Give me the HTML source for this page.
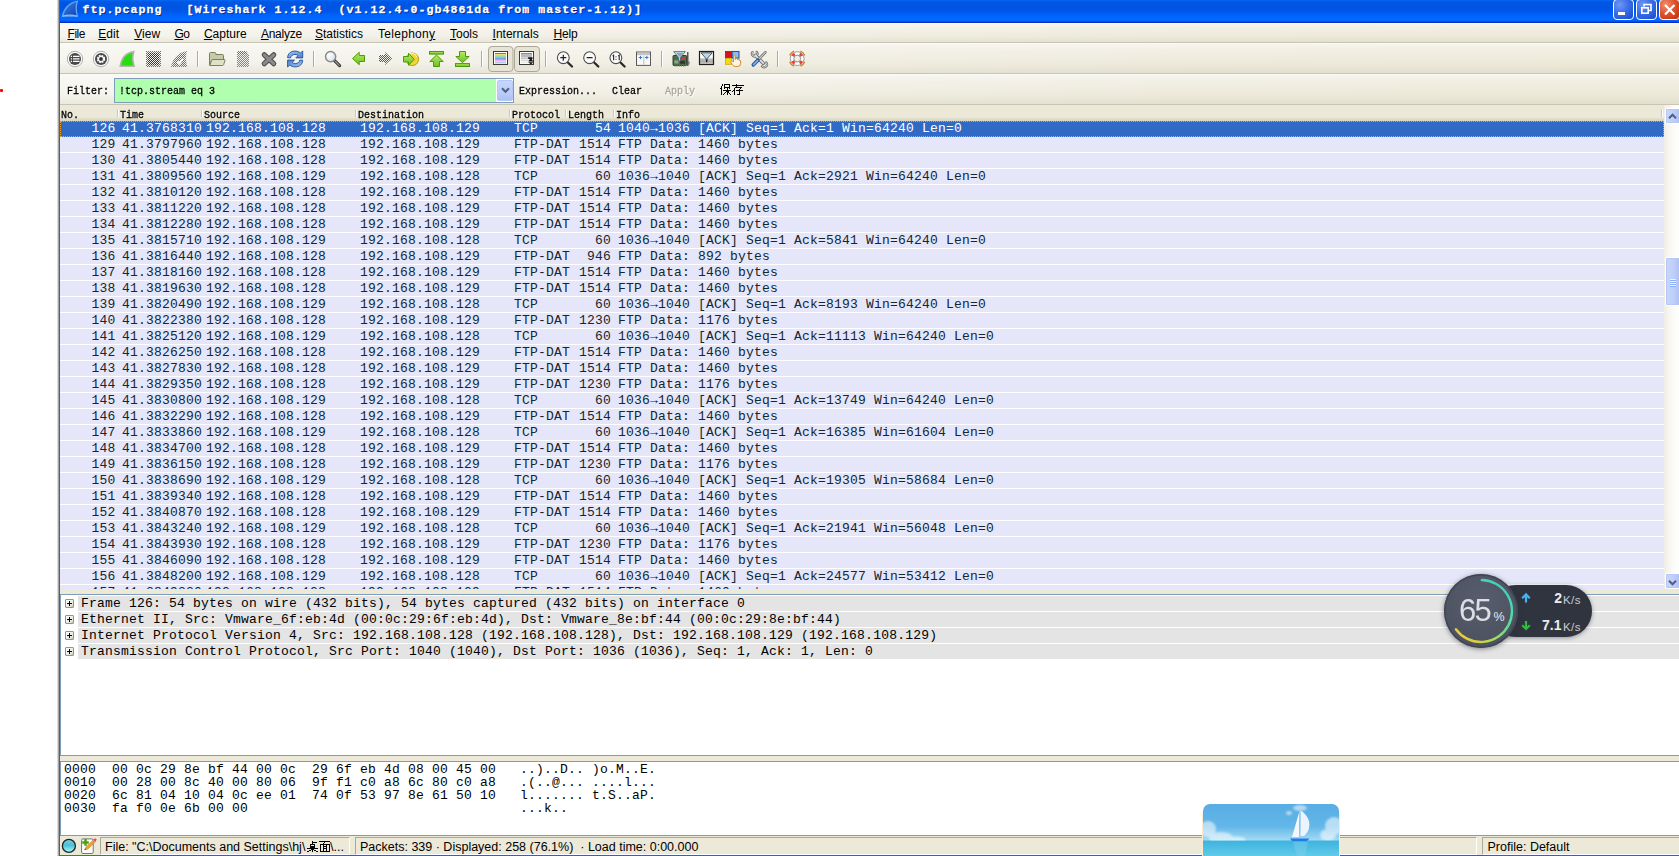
<!DOCTYPE html>
<html><head><meta charset="utf-8"><title>ftp.pcapng</title>
<style>
html,body{margin:0;padding:0}
body{width:1679px;height:856px;overflow:hidden;background:#fff;position:relative;font-family:"Liberation Sans",sans-serif;font-size:11px;color:#000}
div,span,svg{position:absolute;box-sizing:border-box}
.mono{font-family:"Liberation Mono",monospace;font-size:13px;letter-spacing:0.2px;white-space:pre}
/* SimSun-like 6px advance text */
.ss{font-family:"Liberation Mono",monospace;font-size:11px;white-space:pre;transform:scaleX(0.9091);transform-origin:0 0;line-height:14px;color:#000;-webkit-text-stroke:0.3px}
#win{left:60px;top:0;width:1619px;height:856px;background:#ece9d8;overflow:hidden}
#title{left:0;top:0;width:1619px;height:23px;background:linear-gradient(#0768f2 0px,#0059e8 1.5px,#0055e2 4px,#0055e2 9px,#0058ee 12px,#0063fa 15px,#0068ff 18px,#0067ff 20.3px,#0050e8 21.5px,#002fc8 22.4px,#002fc8 23px)}
#ttext{left:22.5px;top:3px;font-family:"Liberation Mono",monospace;font-weight:bold;font-size:11.6px;letter-spacing:1.04px;white-space:pre;color:#fff;text-shadow:1px 1px 0 #0a1883;line-height:14px;-webkit-text-stroke:0.28px #fff}
.tb{top:-1px;width:21px;height:21px;border:1px solid #fff;border-radius:4px;background:radial-gradient(circle at 30% 25%,#6f96f5 0,#3a6fe8 45%,#2456d8 80%,#1c47c4 100%)}
#menubar{left:0;top:23px;width:1619px;height:20px;background:linear-gradient(to bottom,rgba(255,255,255,.55) 0,rgba(255,255,255,.25) 25%,rgba(255,255,255,0) 65%,rgba(170,165,140,.16) 100%),linear-gradient(to right,#f5f4ed 0,#f1efe4 35%,#edeadb 70%,#ece9d8 100%)}
.mi{top:4px;font-size:12px;line-height:14px;white-space:pre}
.mi u{text-decoration:underline}
#toolbar{left:0;top:43px;width:1619px;height:31px;background:linear-gradient(to bottom,rgba(255,255,255,.55) 0,rgba(255,255,255,.25) 25%,rgba(255,255,255,0) 65%,rgba(170,165,140,.16) 100%),linear-gradient(to right,#f5f4ed 0,#f1efe4 35%,#edeadb 70%,#ece9d8 100%)}
#filterbar{left:0;top:74px;width:1619px;height:31px;background:linear-gradient(to bottom,rgba(255,255,255,.55) 0,rgba(255,255,255,.25) 25%,rgba(255,255,255,0) 65%,rgba(170,165,140,.16) 100%),linear-gradient(to right,#f5f4ed 0,#f1efe4 35%,#edeadb 70%,#ece9d8 100%)}
.bl{left:0;bottom:0;width:1619px;height:1px;background:#c8c5b2}
.tl{left:0;top:0;width:1619px;height:1px;background:#fbfaf7}
#colhdr{left:0;top:105px;width:1619px;height:16px;background:linear-gradient(#ebe8d7 0,#ece9d8 12px,#e6e3d1 13px,#dfdcc9 14px,#d8d4c0 16px)}
#colhdr .ss{top:3px}
.sep{top:5px;width:2px;height:7px;border-left:1px solid #c9c6b4;border-right:1px solid #fff}
#list{left:0;top:121px;width:1604px;height:468px;background:#fff;overflow:hidden}
.r{left:0;width:1604px;height:16px;background:#e6e6fa;border-bottom:1px solid #fff;color:#12272e;font-family:"Liberation Mono",monospace;font-size:13px;letter-spacing:0.2px;white-space:pre;line-height:15px}
.r .c{top:0}
.r.sel{background:#316ac5;color:#fff;border:0}
.r.sel .c{top:0}
.r.sel:before{content:"";position:absolute;left:0;top:0;width:1604px;height:16px;box-sizing:border-box;border:1px dotted #f2a526}
.c{top:0}
#vsb{left:1604px;top:105px;width:15px;height:484px;background:linear-gradient(90deg,#f0eee4 0,#f7f6f1 5px,#fdfdfb 12px)}
.sbb{width:16px;border:1px solid #fff;border-radius:2px;background:linear-gradient(90deg,#c9d8fc,#bccdf9 60%,#aebff0);box-shadow:0 0 0 1px #b4c7f6 inset}
#div1{left:0;top:589px;width:1619px;height:5px;background:#ece9d8}
#details{left:0;top:594px;width:1621px;height:162px;background:#fff;border:1px solid #7f9db9}
.d{left:17px;width:1604px;height:15px;background:#e4e4e4;color:#000;font-family:"Liberation Mono",monospace;font-size:13px;letter-spacing:0.2px;white-space:pre;line-height:15px;padding-left:3px}
.ex{left:4px;width:9px;height:9px;border:1px solid #7898b5;border-radius:1px;background:linear-gradient(135deg,#fff 0,#e9e6dc 70%,#c9c5b4 100%)}
.ex:before{content:"";position:absolute;left:1px;top:3px;width:5px;height:1px;background:#000}
.ex:after{content:"";position:absolute;left:3px;top:1px;width:1px;height:5px;background:#000}
#div2{left:0;top:756px;width:1619px;height:5px;background:#ece9d8}
#hex{left:0;top:761px;width:1621px;height:75px;background:#fff;border:1px solid #7f9db9}
#hex .mono{left:3px;line-height:13px;color:#000}
#status{left:0;top:836px;width:1619px;height:20px;background:#ece9d8}
.sbx{top:1px;height:18px;border-bottom:1px solid #fff;border-left:1px solid #aca899;border-top:1px solid #aca899;border-right:1px solid #fff}
.st{top:4px;font-size:12.5px;line-height:14px;white-space:pre}
#pill{left:1430px;top:585px;width:102px;height:52px;border-radius:26px;background:#30343f;box-shadow:0 1px 4px rgba(40,44,60,.45)}
#circ{left:1384px;top:574px;width:74px;height:74px;border-radius:37px;background:radial-gradient(circle at 50% 35%,#585d6d 0,#4f5463 60%,#4a4f5e 100%);border:0;box-shadow:0 0 0 1.5px #414554 inset,0 1px 5px rgba(40,44,60,.55)}
.wt{font-family:"Liberation Sans",sans-serif;line-height:14px;white-space:pre}
#boat{left:1143px;top:804px;width:136px;height:52px;border-radius:7px 7px 0 0;overflow:hidden;box-shadow:-1px 3px 0 0 #fdebd0,1px 3px 0 0 #fdebd0}
</style></head><body>
<div style="left:57px;top:0;width:1px;height:856px;background:#dcdcdc"></div>
<div style="left:58px;top:0;width:1px;height:856px;background:#a4a4a4"></div>
<div style="left:59px;top:0;width:1px;height:856px;background:#5e5e5e"></div>
<div style="left:0;top:89px;width:2.6px;height:2.6px;border-radius:1px;background:#f00"></div>
<div id="win">
 <div id="title">
  <svg style="left:1px;top:0" width="18" height="18" viewBox="61 0 18 18"><defs><linearGradient id="fin" x1="0" y1="0" x2="1" y2="1"><stop offset="0" stop-color="#4a8cf0"/><stop offset="0.5" stop-color="#2462cf"/><stop offset="1" stop-color="#0d44ae"/></linearGradient></defs><path d="M62.5 16.2C64 8.5 69.5 2.5 77.3 1.3C75.8 6 76 11.5 77.3 16.2Z" fill="url(#fin)" stroke="#62a6f6" stroke-width="1.3"/><path d="M62.5 16.2Q70 14 77.3 16.2" stroke="#8dbcf8" stroke-width="1.2" fill="none"/></svg>
  <div id="ttext">ftp.pcapng   [Wireshark 1.12.4  (v1.12.4-0-gb4861da from master-1.12)]</div>
  <div class="tb" style="left:1553px"><div style="left:4px;top:12px;width:7px;height:3px;background:#fff"></div></div>
  <div class="tb" style="left:1576px"><svg style="left:0;top:0" width="19" height="19" viewBox="0 0 19 19"><path d="M7 6.5V4.5H14V10.5H12" fill="none" stroke="#fff" stroke-width="1.6"/><rect x="4.8" y="7.8" width="6.4" height="5.4" fill="none" stroke="#fff" stroke-width="1.6"/></svg></div>
  <div class="tb" style="left:1599px;background:radial-gradient(circle at 30% 25%,#ee9070 0,#dd5530 45%,#c8380e 85%)"><svg style="left:0;top:0" width="19" height="19" viewBox="0 0 19 19"><path d="M5 5L14.5 14.5M14.5 5L5 14.5" stroke="#fff" stroke-width="2.2"/></svg></div>
 </div>
 <div id="menubar"><div class="tl"></div><div class="bl"></div>
  <span class="mi" style="left:7.5px;letter-spacing:-0.45px"><u>F</u>ile</span>
  <span class="mi" style="left:38.3px"><u>E</u>dit</span>
  <span class="mi" style="left:74.3px"><u>V</u>iew</span>
  <span class="mi" style="left:114.4px;letter-spacing:-0.4px"><u>G</u>o</span>
  <span class="mi" style="left:143.9px"><u>C</u>apture</span>
  <span class="mi" style="left:200.9px;letter-spacing:-0.25px"><u>A</u>nalyze</span>
  <span class="mi" style="left:255px"><u>S</u>tatistics</span>
  <span class="mi" style="left:318px;letter-spacing:0.29px">Telephon<u>y</u></span>
  <span class="mi" style="left:390px"><u>T</u>ools</span>
  <span class="mi" style="left:432.6px"><u>I</u>nternals</span>
  <span class="mi" style="left:493.6px;letter-spacing:-0.2px"><u>H</u>elp</span>
 </div>
 <div id="toolbar"><div class="tl"></div><div class="bl"></div>
<svg style="left:0;top:0" width="1619" height="31" viewBox="60 43 1619 31">
<defs>
<pattern id="chk" width="2" height="2" patternUnits="userSpaceOnUse" x="60" y="43"><rect x="0" y="0" width="1" height="1" fill="#fff"/><rect x="1" y="1" width="1" height="1" fill="#fff"/></pattern>
<mask id="dm" maskUnits="userSpaceOnUse" x="60" y="43" width="1619" height="31"><rect x="60" y="43" width="1619" height="31" fill="url(#chk)"/></mask>
<linearGradient id="gg" x1="0" y1="0" x2="0" y2="1"><stop offset="0" stop-color="#b6ea6a"/><stop offset="1" stop-color="#6cc01c"/></linearGradient>
<linearGradient id="bl" x1="0" y1="0" x2="1" y2="1"><stop offset="0" stop-color="#a9c8ee"/><stop offset="1" stop-color="#4a7fc8"/></linearGradient>
<linearGradient id="gr" x1="0" y1="0" x2="0" y2="1"><stop offset="0" stop-color="#fff"/><stop offset="1" stop-color="#9a9a9a"/></linearGradient>
<linearGradient id="dfg" x1="0" y1="0" x2="0" y2="1"><stop offset="0" stop-color="#fff"/><stop offset="0.5" stop-color="#fdfdfd"/><stop offset="0.55" stop-color="#c4c4c4"/><stop offset="0.78" stop-color="#aaa"/><stop offset="1" stop-color="#dcdcdc"/></linearGradient><radialGradient id="lens" cx="0.35" cy="0.35" r="0.8"><stop offset="0" stop-color="#fff"/><stop offset="1" stop-color="#cfdcea"/></radialGradient>
</defs>
<!-- 1 interfaces -->
<circle cx="75" cy="59" r="7.7" fill="#fdfdfd" stroke="#adadad"/><circle cx="75" cy="59" r="6" fill="#484848"/>
<g stroke="#fff" stroke-width="1.25"><path d="M73 56.4H79.5M73 58.9H79.5M73 61.4H79.5"/><path d="M70.8 56.4H72M70.8 58.9H72M70.8 61.4H72"/></g>
<!-- 2 options -->
<circle cx="101" cy="59" r="7.7" fill="#fdfdfd" stroke="#adadad"/><circle cx="101" cy="59" r="6" fill="#484848"/>
<circle cx="101" cy="59" r="3.3" fill="none" stroke="#fff" stroke-width="1.7" stroke-dasharray="1.9 0.7"/><circle cx="101" cy="59" r="2.9" fill="#fff"/><circle cx="101" cy="59" r="1.9" fill="#333"/>
<!-- 3 start -->
<path d="M120.2 66.2C121.4 58.5 126.2 52.8 133.8 51.6C132.4 56 132.6 61.5 134.2 66.2Z" fill="#29dc12" stroke="#b4b4b4" stroke-width="1.5"/>
<!-- 4 stop (disabled) -->
<g mask="url(#dm)"><rect x="146" y="51" width="15" height="16" fill="#707070"/><rect x="148" y="53" width="11" height="12" fill="#8c0f0f"/></g>
<!-- 5 restart (disabled) -->
<g mask="url(#dm)"><path d="M171 67C172.5 58.5 178 52.3 187 51C185.5 56 185.7 61.5 187.3 67Z" fill="#7a7a7a"/><path d="M173.5 65.5C175 59 179 54.5 184.8 53.2C184 57 184.2 61.5 185.2 65.5Z" fill="#1d9a1d"/><path d="M177.5 61.5L179.5 63.5L183 58.5" stroke="#fff" stroke-width="2" fill="none"/></g>
<!-- separators -->
<g><path d="M197.5 51V67M313.5 51V67M481.5 51V67M545.5 51V67M661.5 51V67M777.5 51V67" stroke="#b9ab7d" stroke-width="1"/><path d="M198.5 51V67M314.5 51V67M482.5 51V67M546.5 51V67M662.5 51V67M778.5 51V67" stroke="#fff" stroke-width="1"/></g>
<!-- open folder -->
<path d="M209.5 65V53.5Q209.5 52.5 210.5 52.5H214.8Q215.8 52.5 215.8 53.5V54.5H222.5Q223.5 54.5 223.5 55.5V60H212Z" fill="#c6caa6" stroke="#7b7e60"/>
<path d="M209.7 65.5L211.7 60.3Q212 59.5 213 59.5H224.3Q225.4 59.5 225 60.5L223.6 64.8Q223.3 65.5 222.5 65.5Z" fill="#dfe2c6" stroke="#7b7e60"/>
<!-- save (disabled) -->
<g mask="url(#dm)"><path d="M237 51H246L249 54.5V67H237Z" fill="#858585"/><path d="M238 51H246L248 54H238Z" fill="#2a7ab0"/></g>
<!-- close X -->
<g stroke-linecap="round"><path d="M264.3 54.8L273.7 63.7M273.7 54.8L264.3 63.7" stroke="#4d4d4d" stroke-width="5.2"/><path d="M264.3 54.8L273.7 63.7M273.7 54.8L264.3 63.7" stroke="#8b8b8b" stroke-width="3"/></g>
<!-- reload -->
<g fill="url(#bl)" stroke="#1f4f9f" stroke-width="0.9" stroke-linejoin="round"><path id="rl" d="M287.6 57.8C287.6 53.6 291 51.1 295 51.1C297.4 51.1 299.2 51.9 300.5 53.1L302.7 50.9V57.9H295.8L298.1 55.6C297.3 54.8 296.2 54.4 295 54.4C292.6 54.4 290.9 55.8 290.6 57.8Z"/><path d="M287.6 57.8C287.6 53.6 291 51.1 295 51.1C297.4 51.1 299.2 51.9 300.5 53.1L302.7 50.9V57.9H295.8L298.1 55.6C297.3 54.8 296.2 54.4 295 54.4C292.6 54.4 290.9 55.8 290.6 57.8Z" transform="rotate(180 295.15 59)"/></g>
<!-- find -->
<path d="M334.3 60.3L339.6 65.6" stroke="#3c3c3c" stroke-width="3.2" stroke-linecap="round"/><path d="M335.5 61.5L339.3 65.3" stroke="#9a9a9a" stroke-width="1.1" stroke-linecap="round"/>
<circle cx="330.6" cy="56.6" r="5.1" fill="url(#lens)" stroke="#8a8a8a" stroke-width="1.5"/>
<!-- back -->
<path d="M352.5 58.5L359.2 52.3V55.5H364.5V61.5H359.2V64.7Z" fill="url(#gg)" stroke="#4c9a06" stroke-linejoin="round"/>
<!-- forward (disabled) -->
<g mask="url(#dm)"><path d="M392 58.5L385 52V55H379V62H385V65Z" fill="#3d6f1c"/></g>
<!-- goto -->
<circle cx="412.3" cy="59.3" r="6.3" fill="#f1d534" stroke="#b79c10"/><path d="M408 55.5A5 5 0 0 1 416.8 57" stroke="#faf0a0" stroke-width="1.2" fill="none"/>
<path d="M403.5 56.5H408.5V53.3L414.2 59.3L408.5 65.3V62H403.5Z" fill="url(#gg)" stroke="#4c9a06" stroke-linejoin="round"/>
<!-- top -->
<rect x="429.5" y="51.5" width="14" height="2.6" fill="url(#gg)" stroke="#4c9a06"/><path d="M436.5 55L443.2 61.5H439.5V66.5H433.5V61.5H429.8Z" fill="url(#gg)" stroke="#4c9a06" stroke-linejoin="round"/>
<!-- bottom -->
<rect x="455.5" y="63.6" width="14" height="2.9" fill="url(#gg)" stroke="#4c9a06"/><path d="M462.5 62.6L455.8 56.5H459.5V51.5H465.5V56.5H469.2Z" fill="url(#gg)" stroke="#4c9a06" stroke-linejoin="round"/>
<!-- toggle buttons -->
<rect x="488.5" y="46.5" width="24.5" height="25" rx="3.5" fill="#e7e4d6" stroke="#aba899"/><rect x="514.5" y="46.5" width="25" height="25" rx="3.5" fill="#e7e4d6" stroke="#aba899"/>
<!-- colorize -->
<rect x="493.5" y="51.5" width="14" height="13" fill="#fff" stroke="#3a3a3a"/>
<g><rect x="495" y="53" width="11" height="1.2" fill="#e0504a"/><rect x="495" y="54.2" width="11" height="1.2" fill="#e9de5c"/><rect x="495" y="55.4" width="11" height="1.2" fill="#7ed67a"/><rect x="495" y="56.6" width="11" height="1.2" fill="#62c9c0"/><rect x="495" y="57.8" width="11" height="1.2" fill="#78a6ea"/><rect x="495" y="59" width="11" height="1.2" fill="#c59be8"/><rect x="495" y="60.2" width="11" height="1.4" fill="#f79cf2"/><rect x="495" y="61.6" width="11" height="0.9" fill="#fbc4f8"/><rect x="495" y="62.5" width="11" height="0.8" fill="#5fb7c8"/></g>
<!-- autoscroll -->
<rect x="519.5" y="51.5" width="14" height="13" fill="#fff" stroke="#3a3a3a"/>
<g><rect x="521" y="53" width="11" height="1.6" fill="#8f8f8f"/><rect x="521" y="55.2" width="11" height="1.6" fill="#a9a9a9"/><rect x="521" y="57.4" width="11" height="1.6" fill="#c1c1c1"/><rect x="521" y="59.6" width="11" height="1.6" fill="#d6d6d6"/><rect x="521" y="61.8" width="11" height="1.4" fill="#e8e8e8"/></g>
<path d="M528.2 57.3H532.5V59H531.6L533.4 61.6H528.3L530.1 59H528.2ZM528.3 62.3H533.4L530.9 64.4Z" fill="#111"/>
<!-- zoom in/out/1:1 -->
<g stroke="#2a2a2a" stroke-linecap="round"><path d="M567.6 62.2L572 66.5M593.9 62.2L598.3 66.5M620.2 62.2L624.6 66.5" stroke-width="2.3"/></g>
<g fill="#fbfbfb" stroke="#4c4c4c" stroke-width="1.1"><circle cx="563.3" cy="57.7" r="5.9"/><circle cx="589.6" cy="57.7" r="5.9"/><circle cx="615.9" cy="57.7" r="5.9"/></g>
<path d="M560.3 57.7H566.3M563.3 54.7V60.7M586.6 57.7H592.6" stroke="#222" stroke-width="1.2"/>
<path d="M612.6 56.2L613.6 55.3V60.3M618.2 56.2L619.2 55.3V60.3" stroke="#222" stroke-width="1.1" fill="none"/><rect x="615.5" y="56.3" width="1" height="1" fill="#222"/><rect x="615.5" y="58.8" width="1" height="1" fill="#222"/>
<!-- resize columns -->
<rect x="636.5" y="52" width="14" height="13.4" fill="#f8f8f8" stroke="#5a5a5a"/><rect x="637" y="52.5" width="13" height="2.6" fill="#c4c4c4"/><rect x="643" y="55.5" width="1.5" height="9.5" fill="#d0d0d0"/>
<path d="M638.8 57.5H642.2M640.5 55.8V59.2M645.1 57.5H648.5M646.8 55.8V59.2" stroke="#3a78c8" stroke-width="1"/>
<!-- capture filter -->
<rect x="687" y="52" width="1.5" height="14" fill="#5a5a5a"/><rect x="688.3" y="61.5" width="1.2" height="3" fill="#6a6a6a"/>
<rect x="673" y="55.5" width="13.6" height="10" rx="0.8" fill="#4d6e4d" stroke="#263326" stroke-width="0.9"/><rect x="674.3" y="60.3" width="4.2" height="3.2" fill="#8aa582"/><rect x="680.2" y="60.8" width="4.6" height="3" fill="#2a3a2c"/><rect x="682" y="57.3" width="1" height="2.2" fill="#c44"/><rect x="684" y="57.3" width="1" height="2.2" fill="#c44"/><path d="M674.5 66.2H685.5" stroke="#b8a23a" stroke-width="1.2" stroke-dasharray="1.2 0.9"/>
<path d="M673.7 51.6H685.3L680.4 57.6V61H678.6V57.6Z" fill="#cfe0ee" stroke="#4a5a68" stroke-width="0.8"/><path d="M676 52.8H683.3L679.8 57Z" fill="#7fa6c6"/>
<!-- display filter -->
<rect x="699.5" y="51.5" width="14" height="13" fill="url(#dfg)" stroke="#1e1e1e" stroke-width="1.2"/><path d="M701 52.8H712.2L707.2 58.6V60.2H706V58.6Z" fill="#bcd6ec" stroke="#22303a" stroke-width="0.8"/><rect x="706" y="59.8" width="1.3" height="2.4" fill="#111"/>
<!-- coloring rules -->
<rect x="725.5" y="51.5" width="6.3" height="6.3" fill="#d4141a" stroke="#a80f12" stroke-width="0.8"/><rect x="732.2" y="51.5" width="6.8" height="6.6" fill="#8fbcee" stroke="#2458ae" stroke-width="1.1"/><rect x="725.5" y="58.3" width="6" height="6" fill="#f5dc12" stroke="#c7ac08" stroke-width="0.8"/>
<path d="M733.4 61V55.8Q733.4 54.8 734.3 54.8Q735.2 54.8 735.2 55.8V59.2H735.9V58.5Q736.7 57.9 737.5 58.6V59.5Q738.3 59 739 59.7V60.3Q739.9 59.9 740.6 60.7V63.5Q740.6 66.5 737.6 66.5H735.6Q733.6 66.5 732.4 64.7L730.8 62.2Q730.4 61.2 731.4 60.9Q732.3 60.7 733.4 62Z" fill="#fff6ea" stroke="#d08424" stroke-width="1"/>
<!-- preferences -->
<g stroke-linecap="round" fill="none"><path d="M755.3 55.3L763.2 63.2" stroke="#6e6e6e" stroke-width="3.6"/><path d="M752.6 52.1A2.7 2.7 0 1 0 756.6 51.9" stroke="#6e6e6e" stroke-width="2.3"/><path d="M762 66.3A2.7 2.7 0 1 0 766.3 62.4" stroke="#6e6e6e" stroke-width="2.3"/>
<path d="M755.3 55.3L763.2 63.2" stroke="#dedede" stroke-width="1.9"/><path d="M752.6 52.1A2.7 2.7 0 1 0 756.6 51.9" stroke="#dedede" stroke-width="0.9"/><path d="M762 66.3A2.7 2.7 0 1 0 766.3 62.4" stroke="#dedede" stroke-width="0.9"/>
<path d="M765.3 52.3L759 59" stroke="#6a6a6a" stroke-width="2.6"/><path d="M765.3 52.3L759 59" stroke="#d2d2d2" stroke-width="1.1"/><path d="M757.8 60.2L753.4 64.8" stroke="#1f58a8" stroke-width="3.8"/><path d="M757.6 60.6L753.6 64.6" stroke="#7fb0ea" stroke-width="1.7"/></g>
<!-- help -->
<path d="M804.75 61.80A8.2 8.2 0 0 1 800.40 66.15M794.00 66.15A8.2 8.2 0 0 1 789.65 61.80M789.65 55.40A8.2 8.2 0 0 1 794.00 51.05M800.40 51.05A8.2 8.2 0 0 1 804.75 55.40" fill="none" stroke="#c98524" stroke-width="1.4"/>
<circle cx="797.2" cy="58.6" r="6.9" fill="#fdfdfd" stroke="#9c9c9c" stroke-width="1"/>
<path d="M801.79 61.04A5.2 5.2 0 0 1 799.64 63.19M794.76 63.19A5.2 5.2 0 0 1 792.61 61.04M792.61 56.16A5.2 5.2 0 0 1 794.76 54.01M799.64 54.01A5.2 5.2 0 0 1 801.79 56.16" fill="none" stroke="#f23c3c" stroke-width="2.9"/>
<circle cx="797.2" cy="58.6" r="3.4" fill="#f1efe4" stroke="#8e8e8e" stroke-width="1"/>
</svg>
 </div>
 <div id="filterbar"><div class="tl"></div><div class="bl"></div>
  <span class="ss" style="left:7px;top:10px">Filter:</span>
  <div style="left:54px;top:4px;width:400px;height:25px;background:#fff;border:1px solid #7f9db9"></div>
  <div style="left:55px;top:5px;width:381px;height:23px;background:#afffaf"></div>
  <div style="left:437px;top:6px;width:16px;height:21px;border-radius:2px;border:1px solid #b4c7f6;background:linear-gradient(#c6d6fc,#b9cbf8 70%,#adc0f0)"><svg style="left:3px;top:6px" width="9" height="7" viewBox="0 0 9 7"><path d="M1 1.2L4.5 4.8L8 1.2" fill="none" stroke="#4d6185" stroke-width="2"/></svg></div>
  <span class="ss" style="left:59px;top:10px">!tcp.stream eq 3</span>
  <span class="ss" style="left:459px;top:10px">Expression...</span>
  <span class="ss" style="left:552px;top:10px">Clear</span>
  <span class="ss" style="left:605px;top:10px;color:#aca899;text-shadow:1px 1px 0 #fff">Apply</span>
  <svg style="left:660px;top:10px" width="12" height="11" viewBox="0 0 12 11" shape-rendering="crispEdges" fill="#000"><rect x="2" y="0" width="1" height="1"/><rect x="4" y="0" width="6" height="1"/><rect x="2" y="1" width="1" height="1"/><rect x="4" y="1" width="1" height="1"/><rect x="9" y="1" width="1" height="1"/><rect x="1" y="2" width="1" height="1"/><rect x="4" y="2" width="1" height="1"/><rect x="9" y="2" width="1" height="1"/><rect x="1" y="3" width="1" height="1"/><rect x="4" y="3" width="6" height="1"/><rect x="0" y="4" width="2" height="1"/><rect x="4" y="4" width="1" height="1"/><rect x="7" y="4" width="1" height="1"/><rect x="9" y="4" width="1" height="1"/><rect x="1" y="5" width="1" height="1"/><rect x="7" y="5" width="1" height="1"/><rect x="1" y="6" width="1" height="1"/><rect x="3" y="6" width="8" height="1"/><rect x="1" y="7" width="1" height="1"/><rect x="6" y="7" width="3" height="1"/><rect x="1" y="8" width="1" height="1"/><rect x="5" y="8" width="1" height="1"/><rect x="7" y="8" width="2" height="1"/><rect x="1" y="9" width="1" height="1"/><rect x="4" y="9" width="1" height="1"/><rect x="7" y="9" width="1" height="1"/><rect x="9" y="9" width="1" height="1"/><rect x="1" y="10" width="1" height="1"/><rect x="3" y="10" width="1" height="1"/><rect x="7" y="10" width="1" height="1"/><rect x="10" y="10" width="1" height="1"/></svg><svg style="left:672px;top:10px" width="12" height="11" viewBox="0 0 12 11" shape-rendering="crispEdges" fill="#000"><rect x="4" y="0" width="1" height="1"/><rect x="0" y="1" width="12" height="1"/><rect x="4" y="2" width="1" height="1"/><rect x="3" y="3" width="7" height="1"/><rect x="2" y="4" width="1" height="1"/><rect x="8" y="4" width="1" height="1"/><rect x="2" y="5" width="1" height="1"/><rect x="7" y="5" width="1" height="1"/><rect x="1" y="6" width="2" height="1"/><rect x="4" y="6" width="7" height="1"/><rect x="0" y="7" width="1" height="1"/><rect x="2" y="7" width="1" height="1"/><rect x="7" y="7" width="1" height="1"/><rect x="2" y="8" width="1" height="1"/><rect x="7" y="8" width="1" height="1"/><rect x="2" y="9" width="1" height="1"/><rect x="7" y="9" width="1" height="1"/><rect x="2" y="10" width="1" height="1"/><rect x="5" y="10" width="3" height="1"/></svg>
 </div>
 <div id="colhdr">
  <span class="ss" style="left:1px">No.</span><div class="sep" style="left:57px"></div>
  <span class="ss" style="left:60px">Time</span><div class="sep" style="left:141px"></div>
  <span class="ss" style="left:144px">Source</span><div class="sep" style="left:295px"></div>
  <span class="ss" style="left:298px">Destination</span><div class="sep" style="left:449px"></div>
  <span class="ss" style="left:452px">Protocol</span><div class="sep" style="left:505px"></div>
  <span class="ss" style="left:508px">Length</span><div class="sep" style="left:553px"></div>
  <span class="ss" style="left:556px">Info</span><div class="sep" style="left:1601px"></div>
 </div>
 <div id="list">
<div class="r sel" style="top:0px"><span class="c" style="left:0;width:55.5px;text-align:right">126</span><span class="c" style="left:62px">41.3768310</span><span class="c" style="left:146px">192.168.108.128</span><span class="c" style="left:300px">192.168.108.129</span><span class="c" style="left:454px">TCP</span><span class="c" style="left:510px;width:41px;text-align:right">54</span><span class="c" style="left:558px">1040→1036 [ACK] Seq=1 Ack=1 Win=64240 Len=0</span></div>
<div class="r" style="top:16px"><span class="c" style="left:0;width:55.5px;text-align:right">129</span><span class="c" style="left:62px">41.3797960</span><span class="c" style="left:146px">192.168.108.128</span><span class="c" style="left:300px">192.168.108.129</span><span class="c" style="left:454px">FTP-DAT</span><span class="c" style="left:510px;width:41px;text-align:right">1514</span><span class="c" style="left:558px">FTP Data: 1460 bytes</span></div>
<div class="r" style="top:32px"><span class="c" style="left:0;width:55.5px;text-align:right">130</span><span class="c" style="left:62px">41.3805440</span><span class="c" style="left:146px">192.168.108.128</span><span class="c" style="left:300px">192.168.108.129</span><span class="c" style="left:454px">FTP-DAT</span><span class="c" style="left:510px;width:41px;text-align:right">1514</span><span class="c" style="left:558px">FTP Data: 1460 bytes</span></div>
<div class="r" style="top:48px"><span class="c" style="left:0;width:55.5px;text-align:right">131</span><span class="c" style="left:62px">41.3809560</span><span class="c" style="left:146px">192.168.108.129</span><span class="c" style="left:300px">192.168.108.128</span><span class="c" style="left:454px">TCP</span><span class="c" style="left:510px;width:41px;text-align:right">60</span><span class="c" style="left:558px">1036→1040 [ACK] Seq=1 Ack=2921 Win=64240 Len=0</span></div>
<div class="r" style="top:64px"><span class="c" style="left:0;width:55.5px;text-align:right">132</span><span class="c" style="left:62px">41.3810120</span><span class="c" style="left:146px">192.168.108.128</span><span class="c" style="left:300px">192.168.108.129</span><span class="c" style="left:454px">FTP-DAT</span><span class="c" style="left:510px;width:41px;text-align:right">1514</span><span class="c" style="left:558px">FTP Data: 1460 bytes</span></div>
<div class="r" style="top:80px"><span class="c" style="left:0;width:55.5px;text-align:right">133</span><span class="c" style="left:62px">41.3811220</span><span class="c" style="left:146px">192.168.108.128</span><span class="c" style="left:300px">192.168.108.129</span><span class="c" style="left:454px">FTP-DAT</span><span class="c" style="left:510px;width:41px;text-align:right">1514</span><span class="c" style="left:558px">FTP Data: 1460 bytes</span></div>
<div class="r" style="top:96px"><span class="c" style="left:0;width:55.5px;text-align:right">134</span><span class="c" style="left:62px">41.3812280</span><span class="c" style="left:146px">192.168.108.128</span><span class="c" style="left:300px">192.168.108.129</span><span class="c" style="left:454px">FTP-DAT</span><span class="c" style="left:510px;width:41px;text-align:right">1514</span><span class="c" style="left:558px">FTP Data: 1460 bytes</span></div>
<div class="r" style="top:112px"><span class="c" style="left:0;width:55.5px;text-align:right">135</span><span class="c" style="left:62px">41.3815710</span><span class="c" style="left:146px">192.168.108.129</span><span class="c" style="left:300px">192.168.108.128</span><span class="c" style="left:454px">TCP</span><span class="c" style="left:510px;width:41px;text-align:right">60</span><span class="c" style="left:558px">1036→1040 [ACK] Seq=1 Ack=5841 Win=64240 Len=0</span></div>
<div class="r" style="top:128px"><span class="c" style="left:0;width:55.5px;text-align:right">136</span><span class="c" style="left:62px">41.3816440</span><span class="c" style="left:146px">192.168.108.128</span><span class="c" style="left:300px">192.168.108.129</span><span class="c" style="left:454px">FTP-DAT</span><span class="c" style="left:510px;width:41px;text-align:right">946</span><span class="c" style="left:558px">FTP Data: 892 bytes</span></div>
<div class="r" style="top:144px"><span class="c" style="left:0;width:55.5px;text-align:right">137</span><span class="c" style="left:62px">41.3818160</span><span class="c" style="left:146px">192.168.108.128</span><span class="c" style="left:300px">192.168.108.129</span><span class="c" style="left:454px">FTP-DAT</span><span class="c" style="left:510px;width:41px;text-align:right">1514</span><span class="c" style="left:558px">FTP Data: 1460 bytes</span></div>
<div class="r" style="top:160px"><span class="c" style="left:0;width:55.5px;text-align:right">138</span><span class="c" style="left:62px">41.3819630</span><span class="c" style="left:146px">192.168.108.128</span><span class="c" style="left:300px">192.168.108.129</span><span class="c" style="left:454px">FTP-DAT</span><span class="c" style="left:510px;width:41px;text-align:right">1514</span><span class="c" style="left:558px">FTP Data: 1460 bytes</span></div>
<div class="r" style="top:176px"><span class="c" style="left:0;width:55.5px;text-align:right">139</span><span class="c" style="left:62px">41.3820490</span><span class="c" style="left:146px">192.168.108.129</span><span class="c" style="left:300px">192.168.108.128</span><span class="c" style="left:454px">TCP</span><span class="c" style="left:510px;width:41px;text-align:right">60</span><span class="c" style="left:558px">1036→1040 [ACK] Seq=1 Ack=8193 Win=64240 Len=0</span></div>
<div class="r" style="top:192px"><span class="c" style="left:0;width:55.5px;text-align:right">140</span><span class="c" style="left:62px">41.3822380</span><span class="c" style="left:146px">192.168.108.128</span><span class="c" style="left:300px">192.168.108.129</span><span class="c" style="left:454px">FTP-DAT</span><span class="c" style="left:510px;width:41px;text-align:right">1230</span><span class="c" style="left:558px">FTP Data: 1176 bytes</span></div>
<div class="r" style="top:208px"><span class="c" style="left:0;width:55.5px;text-align:right">141</span><span class="c" style="left:62px">41.3825120</span><span class="c" style="left:146px">192.168.108.129</span><span class="c" style="left:300px">192.168.108.128</span><span class="c" style="left:454px">TCP</span><span class="c" style="left:510px;width:41px;text-align:right">60</span><span class="c" style="left:558px">1036→1040 [ACK] Seq=1 Ack=11113 Win=64240 Len=0</span></div>
<div class="r" style="top:224px"><span class="c" style="left:0;width:55.5px;text-align:right">142</span><span class="c" style="left:62px">41.3826250</span><span class="c" style="left:146px">192.168.108.128</span><span class="c" style="left:300px">192.168.108.129</span><span class="c" style="left:454px">FTP-DAT</span><span class="c" style="left:510px;width:41px;text-align:right">1514</span><span class="c" style="left:558px">FTP Data: 1460 bytes</span></div>
<div class="r" style="top:240px"><span class="c" style="left:0;width:55.5px;text-align:right">143</span><span class="c" style="left:62px">41.3827830</span><span class="c" style="left:146px">192.168.108.128</span><span class="c" style="left:300px">192.168.108.129</span><span class="c" style="left:454px">FTP-DAT</span><span class="c" style="left:510px;width:41px;text-align:right">1514</span><span class="c" style="left:558px">FTP Data: 1460 bytes</span></div>
<div class="r" style="top:256px"><span class="c" style="left:0;width:55.5px;text-align:right">144</span><span class="c" style="left:62px">41.3829350</span><span class="c" style="left:146px">192.168.108.128</span><span class="c" style="left:300px">192.168.108.129</span><span class="c" style="left:454px">FTP-DAT</span><span class="c" style="left:510px;width:41px;text-align:right">1230</span><span class="c" style="left:558px">FTP Data: 1176 bytes</span></div>
<div class="r" style="top:272px"><span class="c" style="left:0;width:55.5px;text-align:right">145</span><span class="c" style="left:62px">41.3830800</span><span class="c" style="left:146px">192.168.108.129</span><span class="c" style="left:300px">192.168.108.128</span><span class="c" style="left:454px">TCP</span><span class="c" style="left:510px;width:41px;text-align:right">60</span><span class="c" style="left:558px">1036→1040 [ACK] Seq=1 Ack=13749 Win=64240 Len=0</span></div>
<div class="r" style="top:288px"><span class="c" style="left:0;width:55.5px;text-align:right">146</span><span class="c" style="left:62px">41.3832290</span><span class="c" style="left:146px">192.168.108.128</span><span class="c" style="left:300px">192.168.108.129</span><span class="c" style="left:454px">FTP-DAT</span><span class="c" style="left:510px;width:41px;text-align:right">1514</span><span class="c" style="left:558px">FTP Data: 1460 bytes</span></div>
<div class="r" style="top:304px"><span class="c" style="left:0;width:55.5px;text-align:right">147</span><span class="c" style="left:62px">41.3833860</span><span class="c" style="left:146px">192.168.108.129</span><span class="c" style="left:300px">192.168.108.128</span><span class="c" style="left:454px">TCP</span><span class="c" style="left:510px;width:41px;text-align:right">60</span><span class="c" style="left:558px">1036→1040 [ACK] Seq=1 Ack=16385 Win=61604 Len=0</span></div>
<div class="r" style="top:320px"><span class="c" style="left:0;width:55.5px;text-align:right">148</span><span class="c" style="left:62px">41.3834700</span><span class="c" style="left:146px">192.168.108.128</span><span class="c" style="left:300px">192.168.108.129</span><span class="c" style="left:454px">FTP-DAT</span><span class="c" style="left:510px;width:41px;text-align:right">1514</span><span class="c" style="left:558px">FTP Data: 1460 bytes</span></div>
<div class="r" style="top:336px"><span class="c" style="left:0;width:55.5px;text-align:right">149</span><span class="c" style="left:62px">41.3836150</span><span class="c" style="left:146px">192.168.108.128</span><span class="c" style="left:300px">192.168.108.129</span><span class="c" style="left:454px">FTP-DAT</span><span class="c" style="left:510px;width:41px;text-align:right">1230</span><span class="c" style="left:558px">FTP Data: 1176 bytes</span></div>
<div class="r" style="top:352px"><span class="c" style="left:0;width:55.5px;text-align:right">150</span><span class="c" style="left:62px">41.3838690</span><span class="c" style="left:146px">192.168.108.129</span><span class="c" style="left:300px">192.168.108.128</span><span class="c" style="left:454px">TCP</span><span class="c" style="left:510px;width:41px;text-align:right">60</span><span class="c" style="left:558px">1036→1040 [ACK] Seq=1 Ack=19305 Win=58684 Len=0</span></div>
<div class="r" style="top:368px"><span class="c" style="left:0;width:55.5px;text-align:right">151</span><span class="c" style="left:62px">41.3839340</span><span class="c" style="left:146px">192.168.108.128</span><span class="c" style="left:300px">192.168.108.129</span><span class="c" style="left:454px">FTP-DAT</span><span class="c" style="left:510px;width:41px;text-align:right">1514</span><span class="c" style="left:558px">FTP Data: 1460 bytes</span></div>
<div class="r" style="top:384px"><span class="c" style="left:0;width:55.5px;text-align:right">152</span><span class="c" style="left:62px">41.3840870</span><span class="c" style="left:146px">192.168.108.128</span><span class="c" style="left:300px">192.168.108.129</span><span class="c" style="left:454px">FTP-DAT</span><span class="c" style="left:510px;width:41px;text-align:right">1514</span><span class="c" style="left:558px">FTP Data: 1460 bytes</span></div>
<div class="r" style="top:400px"><span class="c" style="left:0;width:55.5px;text-align:right">153</span><span class="c" style="left:62px">41.3843240</span><span class="c" style="left:146px">192.168.108.129</span><span class="c" style="left:300px">192.168.108.128</span><span class="c" style="left:454px">TCP</span><span class="c" style="left:510px;width:41px;text-align:right">60</span><span class="c" style="left:558px">1036→1040 [ACK] Seq=1 Ack=21941 Win=56048 Len=0</span></div>
<div class="r" style="top:416px"><span class="c" style="left:0;width:55.5px;text-align:right">154</span><span class="c" style="left:62px">41.3843930</span><span class="c" style="left:146px">192.168.108.128</span><span class="c" style="left:300px">192.168.108.129</span><span class="c" style="left:454px">FTP-DAT</span><span class="c" style="left:510px;width:41px;text-align:right">1230</span><span class="c" style="left:558px">FTP Data: 1176 bytes</span></div>
<div class="r" style="top:432px"><span class="c" style="left:0;width:55.5px;text-align:right">155</span><span class="c" style="left:62px">41.3846090</span><span class="c" style="left:146px">192.168.108.128</span><span class="c" style="left:300px">192.168.108.129</span><span class="c" style="left:454px">FTP-DAT</span><span class="c" style="left:510px;width:41px;text-align:right">1514</span><span class="c" style="left:558px">FTP Data: 1460 bytes</span></div>
<div class="r" style="top:448px"><span class="c" style="left:0;width:55.5px;text-align:right">156</span><span class="c" style="left:62px">41.3848200</span><span class="c" style="left:146px">192.168.108.129</span><span class="c" style="left:300px">192.168.108.128</span><span class="c" style="left:454px">TCP</span><span class="c" style="left:510px;width:41px;text-align:right">60</span><span class="c" style="left:558px">1036→1040 [ACK] Seq=1 Ack=24577 Win=53412 Len=0</span></div>
<div class="r" style="top:464px"><span class="c" style="left:0;width:55.5px;text-align:right">157</span><span class="c" style="left:62px">41.3849330</span><span class="c" style="left:146px">192.168.108.128</span><span class="c" style="left:300px">192.168.108.129</span><span class="c" style="left:454px">FTP-DAT</span><span class="c" style="left:510px;width:41px;text-align:right">1514</span><span class="c" style="left:558px">FTP Data: 1460 bytes</span></div>
 </div>
 <div id="vsb">
  <div class="sbb" style="left:1px;top:3px;height:16px"><svg style="left:2px;top:4px" width="9" height="7" viewBox="0 0 9 7"><path d="M1 5.3L4.5 1.7L8 5.3" fill="none" stroke="#4d6185" stroke-width="2"/></svg></div>
  <div class="sbb" style="left:1px;top:152px;height:49px"><div style="left:4px;top:21px;width:6px;height:1px;background:#eef4fe;box-shadow:0 1px 0 #8cb0f8,0 2px 0 #eef4fe,0 3px 0 #8cb0f8,0 4px 0 #eef4fe,0 5px 0 #8cb0f8,0 6px 0 #eef4fe,0 7px 0 #8cb0f8"></div></div>
  <div class="sbb" style="left:1px;top:468px;height:16px"><svg style="left:2px;top:5px" width="9" height="7" viewBox="0 0 9 7"><path d="M1 1.7L4.5 5.3L8 1.7" fill="none" stroke="#4d6185" stroke-width="2"/></svg></div>
 </div>
 <div id="div1"></div>
 <div id="details">
  <div class="ex" style="top:4px"></div><div class="d" style="top:1px">Frame 126: 54 bytes on wire (432 bits), 54 bytes captured (432 bits) on interface 0</div>
  <div class="ex" style="top:20px"></div><div class="d" style="top:17px">Ethernet II, Src: Vmware_6f:eb:4d (00:0c:29:6f:eb:4d), Dst: Vmware_8e:bf:44 (00:0c:29:8e:bf:44)</div>
  <div class="ex" style="top:36px"></div><div class="d" style="top:33px">Internet Protocol Version 4, Src: 192.168.108.128 (192.168.108.128), Dst: 192.168.108.129 (192.168.108.129)</div>
  <div class="ex" style="top:52px"></div><div class="d" style="top:49px">Transmission Control Protocol, Src Port: 1040 (1040), Dst Port: 1036 (1036), Seq: 1, Ack: 1, Len: 0</div>
 </div>
 <div id="div2"></div>
 <div id="hex">
  <div class="mono" style="top:1px">0000  00 0c 29 8e bf 44 00 0c  29 6f eb 4d 08 00 45 00   ..)..D.. )o.M..E.
0010  00 28 00 8c 40 00 80 06  9f f1 c0 a8 6c 80 c0 a8   .(..@... ....l...
0020  6c 81 04 10 04 0c ee 01  74 0f 53 97 8e 61 50 10   l....... t.S..aP.
0030  fa f0 0e 6b 00 00                                  ...k..</div>
 </div>
 <div id="status">
  <svg style="left:1px;top:2px" width="38" height="18" viewBox="61 838 38 18"><defs><linearGradient id="led" x1="0" y1="0" x2="0" y2="1"><stop offset="0" stop-color="#7ccfe0"/><stop offset="0.45" stop-color="#48c2d6"/><stop offset="1" stop-color="#b0fbfb"/></linearGradient><linearGradient id="pen" x1="0" y1="0" x2="1" y2="1"><stop offset="0" stop-color="#f6b860"/><stop offset="1" stop-color="#e8881c"/></linearGradient></defs><circle cx="68.9" cy="845.9" r="6.5" fill="url(#led)" stroke="#1c2428" stroke-width="1.3"/>
  <rect x="81.6" y="838.9" width="11.6" height="14.6" rx="1.3" fill="#fff" stroke="#747474" stroke-width="1"/><path d="M82.2 842.4H88.8M85.5 839.1V845.7" stroke="#4aa212" stroke-width="2.5"/><path d="M84.6 849.9L86 846.7L93.2 839.8L95.3 842L88 848.9Z" fill="url(#pen)" stroke="#c47a20" stroke-width="0.5"/><path d="M93.2 839.8L94.6 838.5Q96 838 96.7 839.6L95.3 842Z" fill="#f04848"/><path d="M92.3 840.7L93.2 839.8L95.3 842L94.4 842.9Z" fill="#a8a8a8"/><path d="M84.6 849.9L85.2 848.4L86.2 849.3Z" fill="#222"/></svg>
  <div class="sbx" style="left:40px;width:250px"></div>
  <span class="st" style="left:45px">File: "C:\Documents and Settings\hj\</span>
  <svg style="left:247px;top:5px" width="11" height="11" viewBox="0 0 11 11" shape-rendering="crispEdges" fill="#000"><rect x="5" y="0" width="1" height="1"/><rect x="5" y="1" width="5" height="1"/><rect x="5" y="2" width="1" height="1"/><rect x="3" y="3" width="5" height="1"/><rect x="3" y="4" width="1" height="1"/><rect x="7" y="4" width="1" height="1"/><rect x="3" y="5" width="5" height="1"/><rect x="3" y="6" width="5" height="1"/><rect x="0" y="7" width="11" height="1"/><rect x="4" y="8" width="3" height="1"/><rect x="2" y="9" width="2" height="1"/><rect x="5" y="9" width="1" height="1"/><rect x="7" y="9" width="2" height="1"/><rect x="0" y="10" width="2" height="1"/><rect x="5" y="10" width="1" height="1"/><rect x="9" y="10" width="2" height="1"/></svg><svg style="left:259px;top:5px" width="11" height="11" viewBox="0 0 11 11" shape-rendering="crispEdges" fill="#000"><rect x="0" y="0" width="11" height="1"/><rect x="5" y="1" width="1" height="1"/><rect x="4" y="2" width="1" height="1"/><rect x="1" y="3" width="10" height="1"/><rect x="1" y="4" width="1" height="1"/><rect x="4" y="4" width="1" height="1"/><rect x="7" y="4" width="1" height="1"/><rect x="10" y="4" width="1" height="1"/><rect x="1" y="5" width="1" height="1"/><rect x="4" y="5" width="4" height="1"/><rect x="10" y="5" width="1" height="1"/><rect x="1" y="6" width="1" height="1"/><rect x="4" y="6" width="1" height="1"/><rect x="7" y="6" width="1" height="1"/><rect x="10" y="6" width="1" height="1"/><rect x="1" y="7" width="1" height="1"/><rect x="4" y="7" width="4" height="1"/><rect x="10" y="7" width="1" height="1"/><rect x="1" y="8" width="1" height="1"/><rect x="4" y="8" width="1" height="1"/><rect x="7" y="8" width="1" height="1"/><rect x="10" y="8" width="1" height="1"/><rect x="1" y="9" width="1" height="1"/><rect x="4" y="9" width="1" height="1"/><rect x="7" y="9" width="1" height="1"/><rect x="10" y="9" width="1" height="1"/><rect x="1" y="10" width="10" height="1"/></svg><span class="st" style="left:270px">\...</span>
  <div class="sbx" style="left:295px;width:1122px"></div>
  <span class="st" style="left:300px">Packets: 339 · Displayed: 258 (76.1%)  · Load time: 0:00.000</span>
  <div class="sbx" style="left:1422px;width:198px"></div>
  <span class="st" style="left:1427.5px">Profile: Default</span>
  <div style="left:0;top:19px;width:1619px;height:1px;background:#2b5fd9"></div>
  <div style="left:0;top:19px;width:93px;height:1px;background:#2e8a2e"></div>
 </div>
 <!-- overlay widget -->
 <div id="pill"></div>
 <div id="circ"><svg style="left:0;top:0" width="74" height="74" viewBox="0 0 74 74"><defs><linearGradient id="arc" gradientUnits="userSpaceOnUse" x1="60" y1="8" x2="14" y2="62"><stop offset="0" stop-color="#3ccfc4"/><stop offset="0.45" stop-color="#5fdc96"/><stop offset="0.75" stop-color="#b5da50"/><stop offset="1" stop-color="#f0c838"/></linearGradient></defs><path d="M37.8 6A31 31 0 1 1 11.9 55.2" fill="none" stroke="url(#arc)" stroke-width="2.4" stroke-linecap="round"/></svg>
  <span style="left:15px;top:20px;font-size:31px;line-height:34px;color:#e9eaee;letter-spacing:-1.8px;font-family:'Liberation Sans',sans-serif;opacity:.92">65</span>
  <span style="left:49.5px;top:36px;font-size:12.5px;line-height:14px;color:#e9eaee">%</span>
 </div>
 <svg style="left:1459.5px;top:591px" width="12" height="42" viewBox="0 0 12 42"><path d="M6 3.2V11.5M2.2 7.2L6 3.4L9.8 7.2" fill="none" stroke="#3fb6f2" stroke-width="2.2"/><path d="M6 30V38M2.2 34.2L6 38L9.8 34.2" fill="none" stroke="#2dbd38" stroke-width="2.2"/></svg>
 <span class="wt" style="left:1472px;top:591px;width:30px;text-align:right;font-weight:bold;font-size:14px;color:#ececec">2</span>
 <span class="wt" style="left:1503px;top:593px;font-size:11.5px;letter-spacing:0.4px;color:#c9cacf">K/s</span>
 <span class="wt" style="left:1471.5px;top:618.3px;width:30px;text-align:right;font-weight:bold;font-size:14px;color:#ececec">7.1</span>
 <span class="wt" style="left:1503px;top:620.3px;font-size:11.5px;letter-spacing:0.4px;color:#c9cacf">K/s</span>
 <!-- sailboat card -->
 <div id="boat"><svg style="left:0;top:0" width="136" height="52" viewBox="1203 804 136 52"><defs><linearGradient id="sky" x1="0" y1="0" x2="0" y2="1"><stop offset="0" stop-color="#58ade3"/><stop offset="0.6" stop-color="#62b6e8"/><stop offset="1" stop-color="#a6dcf4"/></linearGradient><linearGradient id="sea" x1="0" y1="0" x2="0" y2="1"><stop offset="0" stop-color="#3db3df"/><stop offset="1" stop-color="#62cbe8"/></linearGradient><filter id="bl2"><feGaussianBlur stdDeviation="1.2"/></filter></defs>
 <rect x="1203" y="804" width="136" height="37" fill="url(#sky)"/><rect x="1203" y="840.5" width="136" height="16" fill="url(#sea)"/>
 <clipPath id="skyc"><rect x="1203" y="804" width="136" height="36.5"/></clipPath><g clip-path="url(#skyc)"><g fill="#fff" filter="url(#bl2)" opacity="0.55"><ellipse cx="1208" cy="829" rx="8" ry="8"/><ellipse cx="1221" cy="838" rx="12" ry="6"/><ellipse cx="1236" cy="840" rx="10" ry="3.5"/><ellipse cx="1334" cy="826" rx="9" ry="9"/><ellipse cx="1328" cy="835" rx="8" ry="6"/><ellipse cx="1300" cy="808" rx="7" ry="3"/><ellipse cx="1289" cy="813" rx="3" ry="2"/></g></g>
 <path d="M1299.5 811L1292 837H1299Z" fill="#f4f8fe"/><path d="M1300.5 810.5C1310 816 1313 828 1304 836L1300.5 836Z" fill="#eef4fd"/><path d="M1290 838.5H1309.5L1307 841H1292Z" fill="#1f7ce6"/><path d="M1293 842L1308 842L1305 856H1297Z" fill="#8fd4ee" opacity="0.35"/></svg></div>
</div>
</body></html>
